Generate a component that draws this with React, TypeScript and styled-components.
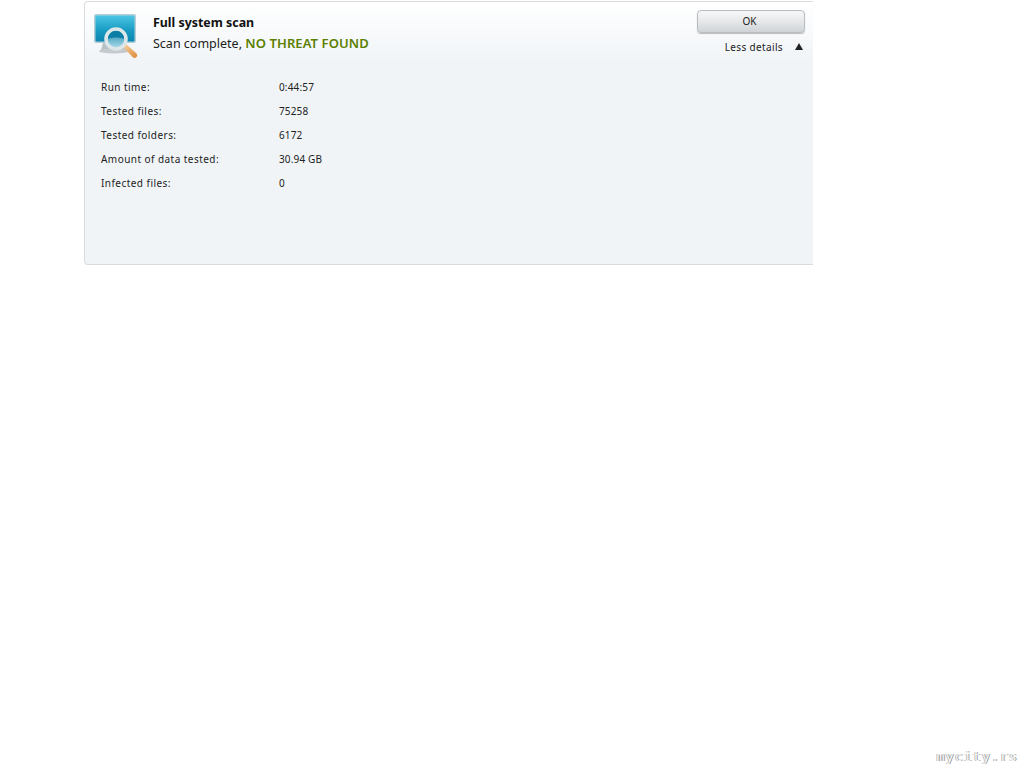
import React from 'react';
import styled, { createGlobalStyle } from 'styled-components';

const GlobalStyle = createGlobalStyle`
  html, body {
    margin: 0;
    padding: 0;
    background: #ffffff;
  }
`;

const Page = styled.div`
  width: 1024px;
  height: 768px;
  position: relative;
  overflow: hidden;
  padding: 1px 0 0 84px;
  box-sizing: border-box;
  font-family: "Noto Sans", "DejaVu Sans", sans-serif;
  color: #1c1c1c;
`;

const Panel = styled.div`
  width: 729px;
  height: 264px;
  box-sizing: border-box;
  border: 1px solid #d9dcde;
  border-right: none;
  border-radius: 4px 0 0 4px;
  background: linear-gradient(to bottom, #ffffff 0, #f0f4f7 62px, #f0f4f7 100%);
`;

const Header = styled.div`
  display: flex;
  height: 73px;
  padding: 8px 8px 0 8px;
  box-sizing: border-box;
`;

const IconBox = styled.div`
  width: 48px;
  height: 50px;
  flex: none;
`;

const Summary = styled.div`
  flex: 1;
  padding: 4px 0 0 12px;
`;

const Title = styled.div`
  font-size: 12.4px;
  font-weight: 700;
  line-height: 18px;
  color: #111111;
`;

const Status = styled.div`
  margin-top: 2px;
  font-size: 12.5px;
  line-height: 18px;
`;

const Verdict = styled.span`
  font-size: 13px;
  font-weight: 600;
  letter-spacing: 0.1px;
  color: #5b7f00;
`;

const Actions = styled.div`
  width: 108px;
  display: flex;
  flex-direction: column;
  align-items: stretch;
`;

const OkButton = styled.button`
  height: 23px;
  padding: 0 3px 2px 0;
  border: 1px solid #b9bdc0;
  border-radius: 4px;
  background: linear-gradient(to bottom, #f6f7f8 0%, #e6e8ea 50%, #cfd3d6 100%);
  box-shadow: 0 1px 1px rgba(0, 0, 0, 0.25);
  font-family: inherit;
  font-size: 10px;
  color: #1c1c1c;
`;

const DetailsToggle = styled.div`
  display: flex;
  justify-content: flex-end;
  align-items: center;
  gap: 12px;
  margin-top: 7px;
  font-size: 10px;
  line-height: 14px;
  letter-spacing: 0.35px;
`;

const Arrow = styled.span`
  width: 0;
  height: 0;
  margin: 0 2px 2px 0;
  border-left: 4.5px solid transparent;
  border-right: 4.5px solid transparent;
  border-bottom: 7px solid #222222;
`;

const Stats = styled.div`
  padding-left: 16px;
`;

const StatRow = styled.div`
  display: grid;
  grid-template-columns: 178px auto;
  height: 24px;
  align-items: center;
  font-size: 10px;
  color: #222222;
`;

const StatLabel = styled.span`
  letter-spacing: 0.45px;
`;

const StatValue = styled.span`
  letter-spacing: 0.15px;
`;

const Watermark = styled.div`
  position: absolute;
  right: 6px;
  bottom: 3px;
  font-family: "DejaVu Sans Mono", monospace;
  font-size: 13px;
  line-height: 16px;
  letter-spacing: 1.2px;
  color: #f4f4f4;
  text-shadow: 1px 0 0 #969696, -1px 0 0 #b8b8b8;
`;

const stats = [
  ['Run time:', '0:44:57'],
  ['Tested files:', '75258'],
  ['Tested folders:', '6172'],
  ['Amount of data tested:', '30.94 GB'],
  ['Infected files:', '0'],
];

const ScanIcon = () => (
  <svg width="48" height="50" viewBox="0 0 48 50">
    <defs>
      <linearGradient id="screen" x1="0" y1="0" x2="0" y2="1">
        <stop offset="0" stopColor="#4cc6e4" />
        <stop offset="0.55" stopColor="#1a9cc4" />
        <stop offset="1" stopColor="#0b86b2" />
      </linearGradient>
      <linearGradient id="lens" x1="0" y1="0" x2="0" y2="1">
        <stop offset="0" stopColor="#0e7fa6" />
        <stop offset="1" stopColor="#b4e2ee" />
      </linearGradient>
      <linearGradient id="handle" x1="0" y1="0" x2="1" y2="1">
        <stop offset="0" stopColor="#f6d4a4" />
        <stop offset="1" stopColor="#dc8a3a" />
      </linearGradient>
    </defs>
    <rect x="1" y="4" width="42" height="29" rx="2" fill="#b4ced8" />
    <rect x="2.500" y="5.500" width="39" height="26" rx="1" fill="url(#screen)" />
    <path d="M10 33h22l2 7H8z" fill="#b8c1c6" />
    <ellipse cx="21" cy="41" rx="15" ry="2.500" fill="#c4cace" />
    <path d="M30 37l3-3 10 9c1.500 1.500 1.500 3 .5 4s-2.500 1.500-4 0z" fill="url(#handle)" />
    <circle cx="23" cy="29" r="10" fill="url(#lens)" stroke="#dde7ea" strokeWidth="3.500" />
    <path d="M15 29a8 8 0 0 1 16 0c-4-2-12-2-16 0z" fill="#0b7ea6" />
  </svg>
);

const App: React.FC = () => {
  return (
    <Page>
      <GlobalStyle />
      <Panel>
        <Header>
          <IconBox>
            <ScanIcon />
          </IconBox>
          <Summary>
            <Title>Full system scan</Title>
            <Status>
              Scan complete, <Verdict>NO THREAT FOUND</Verdict>
            </Status>
          </Summary>
          <Actions>
            <OkButton>OK</OkButton>
            <DetailsToggle>
              Less details
              <Arrow />
            </DetailsToggle>
          </Actions>
        </Header>
        <Stats>
          {stats.map(([label, value]) => (
            <StatRow key={label}>
              <StatLabel>{label}</StatLabel>
              <StatValue>{value}</StatValue>
            </StatRow>
          ))}
        </Stats>
      </Panel>
      <Watermark>mycity.rs</Watermark>
    </Page>
  );
};

export default App;
